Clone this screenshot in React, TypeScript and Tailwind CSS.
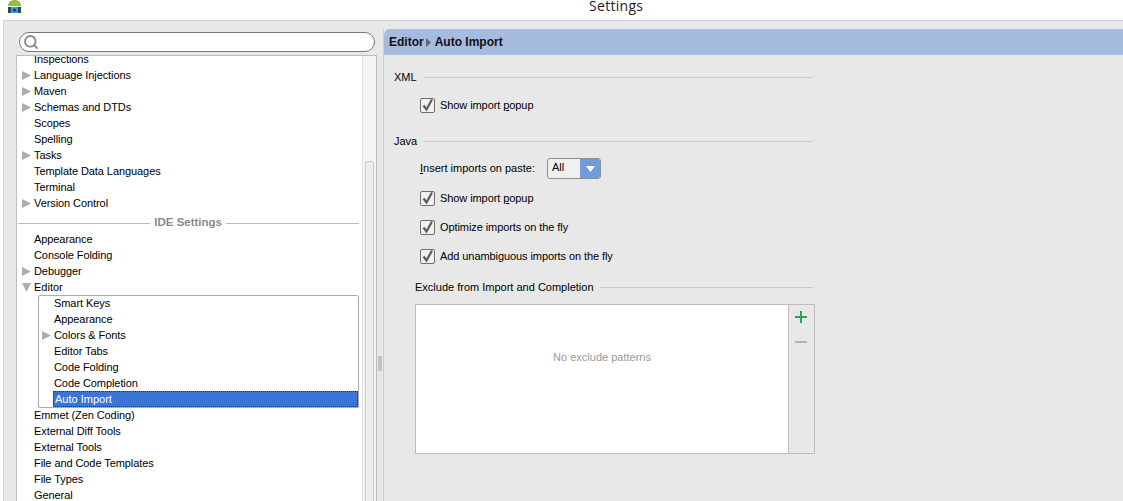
import { Search } from "lucide-react";

const font = { fontFamily: '"Liberation Sans", sans-serif' };

const topRows = [
  { label: "Inspections" },
  { label: "Language Injections", arrow: true },
  { label: "Maven", arrow: true },
  { label: "Schemas and DTDs", arrow: true },
  { label: "Scopes" },
  { label: "Spelling" },
  { label: "Tasks", arrow: true },
  { label: "Template Data Languages" },
  { label: "Terminal" },
  { label: "Version Control", arrow: true },
];

const ideRows = [
  { label: "Appearance" },
  { label: "Console Folding" },
  { label: "Debugger", arrow: true },
];

const editorRows = [
  { label: "Smart Keys" },
  { label: "Appearance" },
  { label: "Colors & Fonts", arrow: true },
  { label: "Editor Tabs" },
  { label: "Code Folding" },
  { label: "Code Completion" },
];

const bottomRows = ["Emmet (Zen Coding)", "External Diff Tools", "External Tools", "File and Code Templates", "File Types", "General"];

function Arrow({ down }: { down?: boolean }) {
  return (
    <svg width="9" height="9" viewBox="0 0 9 9" className="shrink-0">
      <path d={down ? "M0 0 L9 0 L4.5 9 Z" : "M0 0 L9 4.5 L0 9 Z"} fill="#adadad" />
    </svg>
  );
}

function TreeRow({ label, arrow }: { label: string; arrow?: boolean }) {
  return (
    <div className="flex h-4 items-center pl-[5px] text-[11px] leading-4 tracking-[-0.08px] text-black">
      <span className="w-3 shrink-0">{arrow && <Arrow />}</span>
      <span className="whitespace-nowrap">{label}</span>
    </div>
  );
}

function CheckRow({ children, className }: { children: React.ReactNode; className?: string }) {
  return (
    <div className={`flex h-[15px] items-center gap-[5px] text-[11px] tracking-[-0.08px] text-black ${className ?? ""}`}>
      <span className="flex h-[15px] w-[15px] shrink-0 items-center justify-center rounded-[2px] border border-[#6f6f6f] bg-[#f1f1f1]">
        <svg width="13" height="13" viewBox="0 0 13 13">
          <path d="M2.5 6.5 L5.5 10.5 L11 0.5" fill="none" stroke="#5c5c5c" strokeWidth="2.2" />
        </svg>
      </span>
      <span className="whitespace-nowrap">{children}</span>
    </div>
  );
}

function SectionTitle({ label, className }: { label: string; className?: string }) {
  return (
    <div className={`flex h-4 items-center gap-[6px] text-[11px] text-black ${className ?? ""}`}>
      <span className="whitespace-nowrap">{label}</span>
      <span className="h-px flex-1 bg-[#c9c9c9]" />
    </div>
  );
}

function AndroidIcon() {
  return (
    <svg width="15" height="14" viewBox="0 0 15 14" className="ml-[7px] block">
      <path d="M1 6 C1 2 4 0 7.5 0 C11 0 14 2 14 6 Z" fill="#93bd44" />
      <rect x="1" y="7" width="13" height="6" fill="#2b4a44" />
      <rect x="4" y="7" width="7" height="6" fill="#2f9fd8" />
      <circle cx="7.5" cy="10" r="1.5" fill="#123a55" />
    </svg>
  );
}

export default function App() {
  return (
    <div className="h-[501px] w-[1123px] overflow-hidden bg-white" style={font}>
      {/* Title bar */}
      <div className="relative h-5">
        <AndroidIcon />
        <span className="absolute left-[589px] top-0 text-[14px] leading-[12px] tracking-[0.3px] text-[#222]" style={{ fontFamily: '"Open Sans", sans-serif' }}>
          Settings
        </span>
      </div>

      <div className="ml-[3px] flex h-[481px] border-l border-t border-[#d6d6d6] bg-[#e8e8e8]">
        {/* Left column */}
        <div className="ml-[12px] w-[361px] shrink-0">
          <div className="ml-[3px] mt-[11px] flex h-[20px] w-[356px] items-center rounded-full border border-[#777] bg-white pl-[3px]">
            <Search size={16} strokeWidth={2.8} className="text-[#8a8a8a]" />
          </div>
          <div className="mt-[3px] flex h-[460px] w-[361px] overflow-hidden border border-[#bdbdbd] bg-white">
            <div className="w-[345px] shrink-0">
              <div className="-mt-[5px]">
                {topRows.map((r) => <TreeRow key={r.label} {...r} />)}
              </div>
              <div className="flex h-[20px] items-center gap-[4px] pl-[1px] pr-[3px] pt-[4px]">
                <span className="h-px flex-1 bg-[#bbb]" />
                <span className="text-[11.5px] font-bold text-[#8a8a8a]">IDE Settings</span>
                <span className="h-px w-[133px] bg-[#bbb]" />
              </div>
              {ideRows.map((r) => <TreeRow key={r.label} {...r} />)}
              <div className="flex h-4 items-center pl-[5px] text-[11px] text-black">
                <span className="w-3 shrink-0"><Arrow down /></span>
                Editor
              </div>
              <div className="-mb-px ml-[21px] w-[321px] rounded-[2px] border border-t-0 border-[#aaa] shadow-[inset_0_1px_0_#aaa]">
                {editorRows.map((r) => (
                  <div key={r.label} className="flex h-4 items-center pl-[3px] text-[11px] tracking-[-0.08px] text-black">
                    <span className="w-3 shrink-0">{r.arrow && <Arrow />}</span>
                    {r.label}
                  </div>
                ))}
                <div className="ml-[14px] flex h-4 items-center border border-dotted border-[#17325f] bg-[#3875d7] pl-px text-[11px] text-white">
                  Auto Import
                </div>
              </div>
              {bottomRows.map((label) => <TreeRow key={label} label={label} />)}
            </div>
            {/* Scrollbar */}
            <div className="flex-1 border-l border-[#e2e2e2] bg-[#f4f4f4] pl-[2px] pr-[2px] pt-[105px]">
              <div className="h-full rounded-[2px] border border-[#c9c9c9] bg-[#ececec]" />
            </div>
          </div>
        </div>

        {/* Splitter */}
        <div className="flex w-[6px] shrink-0 justify-center pt-[335px]">
          <div className="h-[15px] w-[4px] bg-[radial-gradient(#c4c4c4_1px,transparent_1px)] bg-[length:2px_2px]" />
        </div>

        {/* Right panel */}
        <div className="mt-[8px] flex-1 border-l border-[#cfcfcf]">
          <div className="flex h-[26px] items-center gap-[2px] rounded-tl-[6px] bg-[#a5bbdf] pl-[5px] text-[12px] font-bold text-[#111]">
            Editor
            <svg width="5" height="9" viewBox="0 0 5 9" className="mr-[2px]"><path d="M0 0 L5 4.5 L0 9 Z" fill="#5f6772" /></svg>
            Auto Import
          </div>
          <div className="w-[429px] pl-[10px] pt-[14px]">
            <SectionTitle label="XML" />
            <CheckRow className="ml-[26px] mt-[13px]">Show import <u>p</u>opup</CheckRow>
            <SectionTitle label="Java" className="mt-[20px]" />
            <div className="ml-[26px] mt-[9px] flex h-[21px] items-center text-[11px] text-black">
              <span className="w-[127px] whitespace-nowrap"><u>I</u>nsert imports on paste:</span>
              <div className="flex h-[21px] w-[54px] overflow-hidden rounded-[3px] border border-[#8f8f8f] bg-[#f0f0f0]">
                <span className="flex-1 pl-[4px] leading-[17px]">All</span>
                <span className="flex w-[20px] items-center justify-center bg-[#6f9ddb]">
                  <svg width="9" height="6" viewBox="0 0 9 6"><path d="M0 0 L9 0 L4.5 6 Z" fill="#fff" /></svg>
                </span>
              </div>
            </div>
            <CheckRow className="ml-[26px] mt-[12px]">Show import <u>p</u>opup</CheckRow>
            <CheckRow className="ml-[26px] mt-[14px]">Optimize imports on the fly</CheckRow>
            <CheckRow className="ml-[26px] mt-[14px]">Add unambiguous imports on the fly</CheckRow>
            <SectionTitle label="Exclude from Import and Completion" className="ml-[21px] mt-[15px]" />
            <div className="ml-[21px] mt-[9px] flex h-[150px] w-[400px] border border-[#bcbcbc]">
              <div className="flex flex-1 items-center justify-center bg-white pb-[44px] pt-[1px] text-[11px] text-[#9a9a9a]">
                No exclude patterns
              </div>
              <div className="flex w-[26px] flex-col items-center border-l border-[#bcbcbc] pr-px pt-[6px]">
                <svg width="12" height="12" viewBox="0 0 12 12"><path d="M0 5h5V0h2v5h5v2H7v5H5V7H0Z" fill="#2da44e" /></svg>
                <div className="mt-[18px] h-[2px] w-[12px] bg-[#b4b4b4]" />
              </div>
            </div>
          </div>
        </div>
      </div>
    </div>
  );
}
